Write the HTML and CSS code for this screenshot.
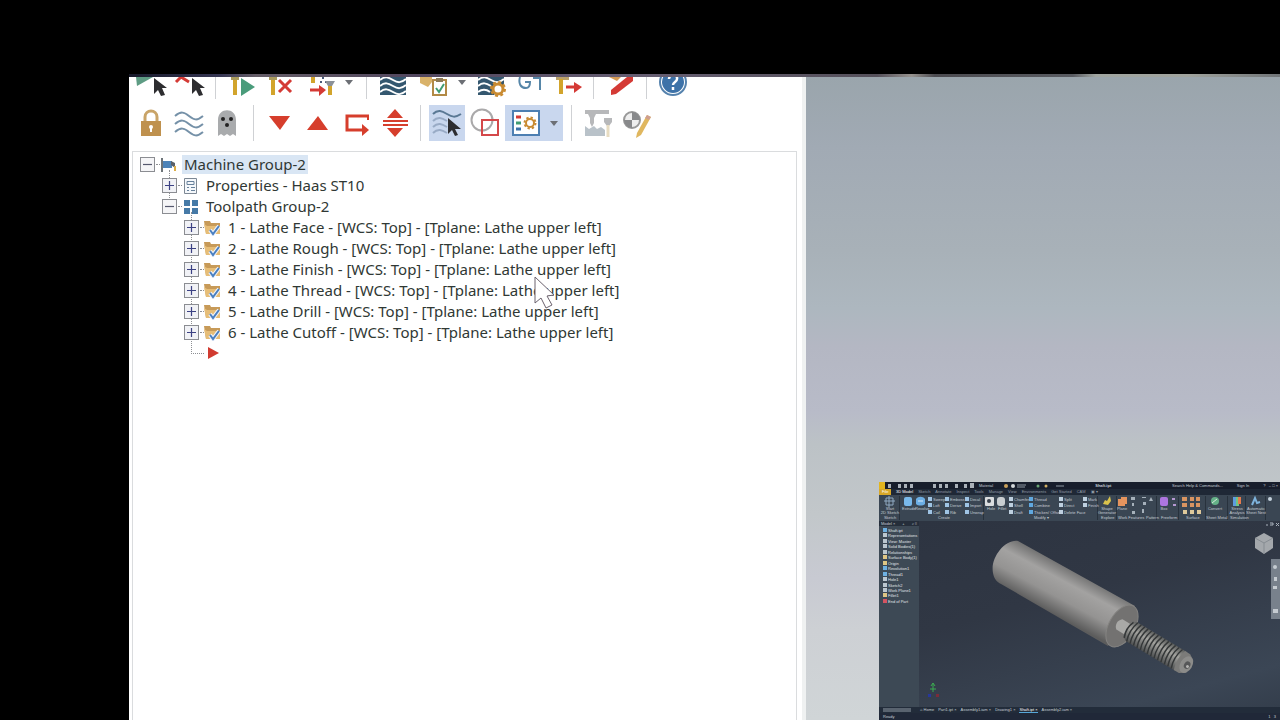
FILE: index.html
```
<!DOCTYPE html>
<html lang="en">
<head>
  <meta charset="UTF-8">
  <meta name="viewport" content="width=device-width, initial-scale=1.0">
  <title>Toolpaths</title>
  <link rel="stylesheet" href="styles.css">
</head>
<body>
  <!-- shared icons -->
  <svg class="defs" width="0" height="0" aria-hidden="true">
    <symbol id="plus" viewBox="0 0 15 15"><rect x=".5" y=".5" width="14" height="14" fill="#f1f2f6" stroke="#8b8d92"/><path d="M3 7.500h9M7.500 3v9" stroke="#3c4284" stroke-width="1.200"/></symbol>
    <symbol id="minus" viewBox="0 0 15 15"><rect x=".5" y=".5" width="14" height="14" fill="#f5f5f7" stroke="#8b8d92"/><path d="M3 7.500h9" stroke="#55586e" stroke-width="1.200"/></symbol>
    <symbol id="folder" viewBox="0 0 17 16"><path d="M0 1h6l1 2h9v11H2z" fill="#c79a58"/><path d="M0 4l3 2h13v8H2z" fill="#e6bd77"/><path d="M6 10l3 4 6-8" fill="none" stroke="#eef3fb" stroke-width="4"/><path d="M6 10l3 4 6-8" fill="none" stroke="#4a7fc0" stroke-width="2"/></symbol>
    <symbol id="drop" viewBox="0 0 8 5"><path d="M0 0h8L4 5z" fill="#6c6f75"/></symbol>
  </svg>

  <main class="stage">
    <div class="strip"></div>
    <div class="workspace">
      <section class="panel">
        <div class="toolbar toolbar-top">
          <button class="tool" aria-label="Select all operations"><svg width="36" height="24"><path d="M3 0h17L4 9z" fill="#5e9c84"/><path d="M21 1v16l4-4 3 6 4-1-3-7h5z" fill="#2d2d30"/></svg></button>
          <button class="tool" aria-label="Clear selection"><svg width="36" height="24"><path d="M5 5l5-5 8 5" fill="none" stroke="#d43a35" stroke-width="3"/><path d="M21 1v16l4-4 3 6 4-1-3-7h5z" fill="#2d2d30"/></svg></button>
          <i class="sep"></i>
          <button class="tool" aria-label="Regenerate selected"><svg width="36" height="24"><path d="M7 0h8v3H7z" fill="#a99a5c"/><path d="M9 3h4v15H9z" fill="#d2a42c"/><path d="M17 1l14 9-14 9z" fill="#4a9c7b"/></svg></button>
          <button class="tool" aria-label="Regenerate dirty"><svg width="36" height="24"><path d="M7 0h8v3H7z" fill="#a99a5c"/><path d="M9 3h4v15H9z" fill="#d2a42c"/><path d="M17 3l12 12M29 3L17 15" stroke="#d43a35" stroke-width="3"/></svg></button>
          <button class="tool tool-wide" aria-label="Post options"><svg width="36" height="24"><path d="M11 0h4v6h-4z" fill="#d2a42c"/><path d="M23 0v2M20 5h2M25 5h2" stroke="#4a5a78" stroke-width="2"/><path d="M10 13h12" stroke="#d43a35" stroke-width="3"/><path d="M19 8l7 5-7 6z" fill="#d43a35"/><path d="M25 4h10l-3 5h-4z" fill="#8b9198"/><path d="M28 9h4v9h-4z" fill="#d2a42c"/></svg><svg class="caret" width="8" height="5"><use href="#drop"/></svg></button>
          <i class="sep"></i>
          <button class="tool" aria-label="Backplot"><svg width="36" height="24"><path d="M5 0h26v18H5z" fill="#34576f"/><path d="M5 3c5-4 8-3 13 0s8 3 13-1M5 9c5-4 8-3 13 0s8 3 13-1M5 15c5-4 8-3 13 0s8 3 13-1" fill="none" stroke="#fff" stroke-width="2"/></svg></button>
          <button class="tool tool-wide" aria-label="Verify"><svg width="36" height="24"><path d="M7 0h12v5l-4 5-8-4z" fill="#d9b26a"/><path d="M20 3h13v15H20z" fill="#fff" stroke="#b28a46" stroke-width="2"/><path d="M23 1h7v4h-7z" fill="#8c7a58"/><path d="M23 11l3 4 5-8" fill="none" stroke="#419c72" stroke-width="2"/></svg><svg class="caret" width="8" height="5"><use href="#drop"/></svg></button>
          <button class="tool" aria-label="Simulator options"><svg width="36" height="24"><path d="M5 0h26v8l-10 10H5z" fill="#34576f"/><path d="M5 3c5-4 8-3 13 0s8 3 13-1M5 9c5-4 8-3 13 0M5 15c4-3 8-3 12 0" fill="none" stroke="#fff" stroke-width="2"/><circle cx="25" cy="12" r="5" fill="#fff" stroke="#c98b32" stroke-width="3"/><circle cx="25" cy="12" r="7" fill="none" stroke="#c98b32" stroke-width="2" stroke-dasharray="3 2.500"/></svg></button>
          <button class="tool" aria-label="Post selected"><svg width="36" height="24"><path d="M9 0c-2 7 1 11 6 11 3 0 4-2 4-6h-5M22 1h8M29 0v13" fill="none" stroke="#5686a8" stroke-width="2"/></svg></button>
          <button class="tool" aria-label="High feed"><svg width="36" height="24"><path d="M7 0h13v3H7z" fill="#b9a06a"/><path d="M10 2h4v15h-4z" fill="#d2a42c"/><path d="M17 10h11" stroke="#d43a35" stroke-width="3"/><path d="M25 5l8 5-8 6z" fill="#d43a35"/></svg></button>
          <i class="sep"></i>
          <button class="tool" aria-label="Delete"><svg width="36" height="24"><path d="M7 0h12l-4 4z" fill="#d59a55"/><path d="M25 0h6v4L14 17l-5 1v-5z" fill="#d43a35"/></svg></button>
          <i class="sep"></i>
          <button class="tool" aria-label="Help"><svg width="36" height="24"><circle cx="18" cy="5" r="13" fill="#fff" stroke="#5582ad" stroke-width="2"/><circle cx="18" cy="5" r="11" fill="#3d72a8"/><path d="M14 2c0-5 9-5 8 0 0 3-4 3-4 6M18 10v3" fill="none" stroke="#fff" stroke-width="2.500"/></svg></button>
        </div>

        <div class="toolbar">
          <button class="tool" aria-label="Lock"><svg width="36" height="36"><path d="M12 18v-6c0-8 12-8 12 0v6" fill="none" stroke="#c9a468" stroke-width="3"/><path d="M8 16h20v15H8z" fill="#bf914e"/><path d="M18 27v-5" stroke="#fff" stroke-width="2"/><circle cx="18" cy="22" r="2" fill="#fff"/></svg></button>
          <button class="tool" aria-label="Toggle display"><svg width="36" height="36"><path d="M4 11c6-5 9-4 14 0s8 5 14 0M4 19c6-5 9-4 14 0s8 5 14 0M4 27c6-5 9-4 14 0s8 5 14 0" fill="none" stroke="#7591a8" stroke-width="2"/></svg></button>
          <button class="tool" aria-label="Toggle posting"><svg width="36" height="36"><path d="M9 31V15c0-13 18-13 18 0v16l-3-2-3 2-3-2-3 2-3-2z" fill="#a9abad"/><circle cx="14" cy="14" r="2" fill="#222"/><circle cx="22" cy="14" r="2" fill="#222"/><circle cx="18" cy="20" r="2" fill="#222"/></svg></button>
          <i class="sep"></i>
          <button class="tool" aria-label="Move down"><svg width="36" height="36"><path d="M7 11h21L18 25z" fill="#d63e2c"/></svg></button>
          <button class="tool" aria-label="Move up"><svg width="36" height="36"><path d="M7 25h21L18 11z" fill="#d63e2c"/></svg></button>
          <button class="tool" aria-label="Position insert arrow"><svg width="36" height="36"><path d="M31 11H9v14h15" fill="none" stroke="#d63e2c" stroke-width="3"/><path d="M24 19l7 6-7 6z" fill="#d63e2c"/><path d="M30 10v5" stroke="#d63e2c" stroke-width="2"/></svg></button>
          <button class="tool" aria-label="Scroll to insert arrow"><svg width="36" height="36"><path d="M11 13l8-9 8 9zM11 23l8 9 8-9z" fill="#d63e2c"/><path d="M7 16h25M7 20h25" stroke="#d63e2c" stroke-width="2"/></svg></button>
          <i class="sep"></i>
          <button class="tool active" aria-label="Show selected only"><svg width="36" height="36"><path d="M4 9c5-5 9-3 14 0s8 4 14 0" fill="none" stroke="#5a7894" stroke-width="2"/><path d="M4 16c5-5 9-3 14 0M4 22c5-5 9-3 14 0M4 28c5-5 9-3 14 0" fill="none" stroke="#99abc6" stroke-width="2"/><path d="M19 13v16l4-4 3 6 3-1-3-6h6z" fill="#2d2d30"/></svg></button>
          <button class="tool" aria-label="Show associated geometry"><svg width="36" height="36"><circle cx="15" cy="15" r="10.500" fill="none" stroke="#aaa9aa" stroke-width="2"/><path d="M15 15h16v15H15z" fill="none" stroke="#d4484a" stroke-width="2"/></svg></button>
          <button class="tool tool-wide active" aria-label="Display options"><svg width="36" height="36"><path d="M8 6h26v24H8z" fill="#fff" stroke="#4d7fb2" stroke-width="2"/><path d="M11 12h5" stroke="#d43a35" stroke-width="3"/><path d="M11 18h5" stroke="#419c72" stroke-width="3"/><path d="M11 24h5" stroke="#3d72a8" stroke-width="3"/><circle cx="25" cy="18" r="4" fill="none" stroke="#c98b32" stroke-width="2"/><circle cx="25" cy="18" r="5.500" fill="none" stroke="#c98b32" stroke-width="2" stroke-dasharray="2.300 2"/></svg><svg class="caret" width="8" height="5"><use href="#drop"/></svg></button>
          <i class="sep"></i>
          <button class="tool" aria-label="Stock display"><svg width="36" height="36"><path d="M5 5h24v4H5zM8 9h8l-2 4v5l-2 4-2-4v-5zM24 13h8v4l-3 4h-2l-3-4z" fill="#b7b8ba"/><path d="M5 31V21l4 3 5-3 3 3 4-2 4 3v6z" fill="#b9c2c9"/><path d="M28 20v12" stroke="#e7dcc2" stroke-width="3"/></svg></button>
          <button class="tool" aria-label="Edit origin"><svg width="36" height="36"><circle cx="14" cy="15" r="8" fill="#eee" stroke="#999" stroke-width="2"/><path d="M14 7a8 8 0 0 1 8 8H6a8 8 0 0 0 8 8z" fill="#88898b"/><path d="M29 10l4 2-10 18-5 3 1-5z" fill="#e0b75f"/><path d="M29 10l4 2-2 3-4-2z" fill="#cf9f90"/></svg></button>
        </div>

        <div class="tree">
          <div class="row">
            <button class="expander" aria-label="Collapse"><svg width="15" height="15"><use href="#minus"/></svg></button>
            <svg class="icon" width="17" height="16"><path d="M2 1v14" stroke="#6d7479" stroke-width="2"/><path d="M3 4h9v7H3z" fill="#4d83b8"/><path d="M11 4l4 2v5l-4-3z" fill="#596068"/><path d="M15 9v5" stroke="#dcae49" stroke-width="2"/></svg>
            <span class="label selected">Machine Group-2</span>
          </div>
          <div class="branch">
            <div class="row">
              <button class="expander" aria-label="Expand"><svg width="15" height="15"><use href="#plus"/></svg></button>
              <svg class="icon" width="17" height="16"><path d="M2.500.5h12v15h-12z" fill="#f5f8fb" stroke="#7d8894"/><path d="M5 3.500h7v3H5z" fill="none" stroke="#67819b"/><path d="M5 9.500h2M5 12.500h2M9 9.500h4M9 12.500h4" stroke="#67819b"/></svg>
              <span class="label">Properties - Haas ST10</span>
            </div>
            <div class="row">
              <button class="expander" aria-label="Collapse"><svg width="15" height="15"><use href="#minus"/></svg></button>
              <svg class="icon" width="17" height="16"><path d="M2 1h6v6H2zM10 1h6v6h-6zM2 9h6v6H2zM10 9h6v6h-6z" fill="#467aa7"/></svg>
              <span class="label">Toolpath Group-2</span>
            </div>
            <div class="branch operations">
              <div class="row">
                <button class="expander" aria-label="Expand"><svg width="15" height="15"><use href="#plus"/></svg></button>
                <svg class="icon" width="17" height="16"><use href="#folder"/></svg>
                <span class="label">1 - Lathe Face - [WCS: Top] - [Tplane: Lathe upper left]</span>
              </div>
              <div class="row">
                <button class="expander" aria-label="Expand"><svg width="15" height="15"><use href="#plus"/></svg></button>
                <svg class="icon" width="17" height="16"><use href="#folder"/></svg>
                <span class="label">2 - Lathe Rough - [WCS: Top] - [Tplane: Lathe upper left]</span>
              </div>
              <div class="row">
                <button class="expander" aria-label="Expand"><svg width="15" height="15"><use href="#plus"/></svg></button>
                <svg class="icon" width="17" height="16"><use href="#folder"/></svg>
                <span class="label">3 - Lathe Finish - [WCS: Top] - [Tplane: Lathe upper left]</span>
              </div>
              <div class="row">
                <button class="expander" aria-label="Expand"><svg width="15" height="15"><use href="#plus"/></svg></button>
                <svg class="icon" width="17" height="16"><use href="#folder"/></svg>
                <span class="label">4 - Lathe Thread - [WCS: Top] - [Tplane: Lathe upper left]</span>
              </div>
              <div class="row">
                <button class="expander" aria-label="Expand"><svg width="15" height="15"><use href="#plus"/></svg></button>
                <svg class="icon" width="17" height="16"><use href="#folder"/></svg>
                <span class="label">5 - Lathe Drill - [WCS: Top] - [Tplane: Lathe upper left]</span>
              </div>
              <div class="row">
                <button class="expander" aria-label="Expand"><svg width="15" height="15"><use href="#plus"/></svg></button>
                <svg class="icon" width="17" height="16"><use href="#folder"/></svg>
                <span class="label">6 - Lathe Cutoff - [WCS: Top] - [Tplane: Lathe upper left]</span>
              </div>
              <div class="row insert">
                <span class="expander"></span>
                <svg class="icon" width="17" height="16"><path d="M4 1l11 6-11 6z" fill="#d13b30"/></svg>
              </div>
            </div>
          </div>
        </div>
      </section>

      <section class="viewport"></section>
    </div>

    <!-- part preview -->
    <section class="preview">
      <header class="app-title">
        <svg width="100" height="7"><path d="M0 0h6v7H0z" fill="#e2b51f"/><path d="M9 2h3v4H9zM19 2h3v4h-3zM25 2h3v4h-3zM31 2h3v4h-3zM54 2h3v4h-3zM60 2h3v4h-3zM66 2h3v4h-3zM76 2h3v4h-3zM85 2h3v4h-3zM91 1h4v5h-4z" fill="#a9b0b8"/></svg>
        <span>Material</span>
        <svg width="90" height="7"><circle cx="13" cy="4" r="2" fill="#c9a05a"/><circle cx="20" cy="4" r="2" fill="#d3d7da"/><path d="M24 3h9M24 5h8M63 4h8" stroke="#8e98a2"/><circle cx="45" cy="4" r="1.500" fill="#69a473"/><circle cx="53" cy="4" r="1.500" fill="#d0af62"/></svg>
        <b>Shaft.ipt</b>
        <span class="search">Search Help &amp; Commands...</span>
        <span>Sign In</span>
        <span>? &nbsp; – □ ×</span>
      </header>
      <nav class="app-tabs">
        <a class="file" href="#">File</a><a class="current" href="#">3D Model</a><a href="#">Sketch</a><a href="#">Annotate</a><a href="#">Inspect</a><a href="#">Tools</a><a href="#">Manage</a><a href="#">View</a><a href="#">Environments</a><a href="#">Get Started</a><a href="#">CAM</a><a href="#">▣ ▾</a>
      </nav>
      <svg class="ribbon" viewBox="879 495 401 26" role="img" aria-label="Ribbon">
        <g stroke="#28323d"><path d="M899.500 496v24M983.500 496v24M1097.500 496v24M1116.500 496v24M1156.500 496v24M1178.500 496v24M1205.500 496v24M1227.500 496v24M1245.500 496v24M1265.500 496v24"/></g>
        <path d="M886 498h7v7h-7zM884 501h11M889 496v12" fill="none" stroke="#8fa9c2"/>
        <rect x="904" y="497" width="8" height="9" rx="2" fill="#79b9eb"/>
        <path d="M916 499c2-3 7-3 9 0v5c-2 2-7 2-9 0z" fill="#6caee4"/><path d="M918 501h5" stroke="#d8e9f6"/>
        <g fill="#9fc4e4"><path d="M928 497h4v4h-4zM928 503h4v4h-4zM928 510h4v4h-4zM945 497h4v4h-4zM945 503h4v4h-4zM945 510h4v4h-4zM965 497h4v4h-4zM965 503h4v4h-4zM965 510h4v4h-4z"/></g>
        <rect x="985" y="497" width="9" height="9" rx="1" fill="#dadddf"/><circle cx="989" cy="501" r="2" fill="#38424d"/>
        <rect x="997" y="497" width="8" height="9" rx="3" fill="#c9ced1"/>
        <g fill="#bed0df"><path d="M1009 497h4v4h-4zM1009 503h4v4h-4zM1009 510h4v4h-4zM1083 497h4v4h-4zM1083 503h4v4h-4zM1059 497h4v4h-4zM1059 503h4v4h-4zM1059 510h4v4h-4z"/></g>
        <g fill="#60a8df"><path d="M1029 497h4v4h-4zM1029 503h4v4h-4zM1029 510h4v4h-4z"/></g>
        <path d="M1103 504l2-4 2 1 3-5 1 5-3 4z" fill="#d9c24c"/>
        <path d="M1118 499h7v7h-7zM1121 497h6v7h-6z" fill="#e5945e"/>
        <g fill="#a6b1bb"><path d="M1131 497h4v3h-4zM1132 503h2v3h-2zM1132 511h3v3h-3zM1142 497h4v1h-4zM1143 502h3v3h-3zM1142 509h2v4h-2zM1149 501l2-4 2 4z"/></g>
        <rect x="1160" y="497" width="8" height="9" rx="2" fill="#ad75df"/><path d="M1172 499h3M1173 505h3" stroke="#b698d2" stroke-width="2"/>
        <g fill="#d99461"><path d="M1182 497h5v4h-5zM1190 497h4v4h-4zM1196 497h4v4h-4zM1182 503h5v4h-5zM1190 503h4v4h-4zM1196 503h4v4h-4z"/></g><path d="M1183 510h4v4h-4zM1190 510h4v4h-4zM1197 510h4v4h-4z" fill="#dfc99b"/>
        <circle cx="1215" cy="501" r="4" fill="#65b188"/><path d="M1212 503l5-4" stroke="#d8e9dc"/>
        <path d="M1233 497h3v9h-3z" fill="#5d9ce0"/><path d="M1236 497h3v9h-3z" fill="#72c582"/><path d="M1238 497h3v7h-3z" fill="#e67b4c"/>
        <path d="M1252 505l3-7 2 5 3-1" fill="none" stroke="#7eb4dd" stroke-width="2"/><circle cx="1270" cy="499" r="2" fill="#c4d2dd"/>
        <g class="tiny">
          <text x="890" y="510" text-anchor="middle">Start</text><text x="890" y="514" text-anchor="middle">2D Sketch</text><text x="890" y="519" text-anchor="middle">Sketch</text>
          <text x="902" y="510">Extrude</text><text x="915" y="510">Revolve</text>
          <text x="933" y="501">Sweep</text><text x="933" y="507">Loft</text><text x="933" y="514">Coil</text>
          <text x="950" y="501">Emboss</text><text x="950" y="507">Derive</text><text x="950" y="514">Rib</text>
          <text x="970" y="501">Decal</text><text x="970" y="507">Import</text><text x="970" y="514">Unwrap</text><text x="938" y="519">Create</text>
          <text x="987" y="510">Hole</text><text x="998" y="510">Fillet</text>
          <text x="1014" y="501">Chamfer</text><text x="1014" y="507">Shell</text><text x="1014" y="514">Draft</text>
          <text x="1034" y="501">Thread</text><text x="1034" y="507">Combine</text><text x="1034" y="514">Thicken/ Offset</text>
          <text x="1064" y="501">Split</text><text x="1064" y="507">Direct</text><text x="1064" y="514">Delete Face</text><text x="1034" y="519">Modify ▾</text>
          <text x="1088" y="501">Mark</text><text x="1088" y="507">Finish</text>
          <text x="1107" y="510" text-anchor="middle">Shape</text><text x="1107" y="514" text-anchor="middle">Generator</text><text x="1101" y="519">Explore</text>
          <text x="1122" y="510" text-anchor="middle">Plane</text><text x="1118" y="519">Work Features</text><text x="1146" y="519">Pattern</text>
          <text x="1164" y="510" text-anchor="middle">Box</text><text x="1161" y="519">Freeform</text><text x="1186" y="519">Surface</text>
          <text x="1215" y="510" text-anchor="middle">Convert</text><text x="1206" y="519">Sheet Metal</text>
          <text x="1237" y="510" text-anchor="middle">Stress</text><text x="1237" y="514" text-anchor="middle">Analysis</text><text x="1230" y="519">Simulation</text>
          <text x="1256" y="510" text-anchor="middle">Automatic</text><text x="1256" y="514" text-anchor="middle">Sheet Nest</text>
        </g>
      </svg>
      <div class="app-body">
        <aside class="browser">
          <div class="browser-head"><span>Model ×</span><span>+</span><span>⌕ ≡</span></div>
          <ul>
            <li class="blue">Shaft.ipt</li>
            <li>Representations</li>
            <li>View: Master</li>
            <li>Solid Bodies(1)</li>
            <li>Relationships</li>
            <li class="gold">Surface Body(1)</li>
            <li class="gold">Origin</li>
            <li class="blue">Revolution1</li>
            <li class="blue">Thread1</li>
            <li>Hole1</li>
            <li>Sketch2</li>
            <li>Work Plane1</li>
            <li class="gold">Fillet1</li>
            <li class="red">End of Part</li>
          </ul>
        </aside>
        <div class="model">
          <svg class="part" viewBox="919 521 361 186" role="img" aria-label="Threaded shaft">
            <defs>
              <linearGradient id="shaft" gradientUnits="userSpaceOnUse" x1="1074" y1="570" x2="1051" y2="613"><stop offset="0" stop-color="#6f6f6f"/><stop offset=".3" stop-color="#a3a2a1"/><stop offset=".65" stop-color="#949392"/><stop offset="1" stop-color="#5c5c5c"/></linearGradient>
              <linearGradient id="thread" gradientUnits="userSpaceOnUse" x1="0" y1="-11" x2="0" y2="11"><stop offset="0" stop-color="#5e605f"/><stop offset=".4" stop-color="#a3a39f"/><stop offset="1" stop-color="#4e5051"/></linearGradient>
            </defs>
            <path d="M1018 541c-13-2-28 17-25 32 1 6 4 9 8 11l107 62 27-40z" fill="url(#shaft)"/>
            <ellipse cx="1122" cy="626" rx="13" ry="23" transform="rotate(30 1122 626)" fill="#737271" stroke="#858482"/>
            <g transform="translate(1122 626) rotate(31)">
              <path d="M-3-6H9V6H-3c-4-3-4-9 0-12z" fill="#a9a9a7"/>
              <path d="M6-9l5-2h58l5 3V8l-5 3H11L6 8z" fill="url(#thread)"/>
              <path d="M8-9q-4 9 0 18M12-11q-4 11 0 22M16-11q-4 11 0 22M20-11q-4 11 0 22M24-11q-4 11 0 22M28-11q-4 11 0 22M32-11q-4 11 0 22M36-11q-4 11 0 22M40-11q-4 11 0 22M44-11q-4 11 0 22M48-11q-4 11 0 22M52-11q-4 11 0 22M56-11q-4 11 0 22M60-11q-4 11 0 22M64-11q-4 11 0 22" fill="none" stroke="#343738" stroke-width="1.500"/>
              <path d="M67-11h6l6 4V7l-6 4h-6q-4-11 0-22z" fill="#7b7b79"/>
              <ellipse cx="75" cy="0" rx="6" ry="9" fill="#8c8c8a"/><ellipse cx="76" cy="0" rx="3" ry="4" fill="#565758"/><circle cx="77" cy="1" r="1.500" fill="#b4b4b2"/>
            </g>
            <path d="M1264 533l9 5v10l-9 6-9-6v-10z" fill="#a4a8ac"/><path d="M1255 538l9 5 9-5M1264 543v11" fill="none" stroke="#868c92"/>
            <path d="M1271 559h9v60h-9z" fill="#78818c"/><g fill="#c5cbd1"><circle cx="1275" cy="567" r="2"/><path d="M1274 577h3v4h-3zM1273 586h4v3h-4zM1273 609h5v4h-5z"/></g>
            <path d="M933 692v-9M931 686l2-3 2 3M930 689h6" fill="none" stroke="#3bab50"/><path d="M928 694h3v3h-3z" fill="#27379c"/><path d="M936 694h3v3h-3z" fill="#7a2b39"/>
            <path d="M1266 525h2M1270 523h3v2h-3M1276 523l3 3M1279 523l-3 3" fill="none" stroke="#aab3bd"/>
          </svg>
        </div>
      </div>
      <div class="doc-tabs"><i class="scroll"></i><span>⌂ Home</span><span>Part1.ipt ×</span><span>Assembly1.iam ×</span><span>Drawing1 ×</span><span class="current">Shaft.ipt ×</span><span>Assembly2.iam ×</span></div>
      <footer class="status"><span>Ready</span><span>1 &nbsp; 3</span></footer>
    </section>

    <svg class="pointer" width="22" height="34" aria-hidden="true"><path d="M1 1v26l6-5 5 10 6-3-5-9 7-1z" fill="#fff" stroke="#6b626e"/></svg>
  </main>
</body>
</html>
```
FILE: styles.css
```
* {
  box-sizing: border-box;
}
body {
  margin: 0;
  background-color: #000;
  font-family: "Noto Sans", sans-serif;
}
button {
  font: inherit;
  border: none;
  background: none;
  padding: 0;
  cursor: pointer;
}
svg {
  display: block;
}
.defs {
  position: absolute;
}
.stage {
  position: relative;
  display: flex;
  flex-direction: column;
  min-height: 100vh;
  padding: 74px 0 0 129px;
  overflow: hidden;
}
.strip {
  height: 3px;
  background: linear-gradient(90deg, #17192a, #363653 8%, #655d67 11%, #51465e 25%, #665e72 45%, #55505a 65%, #96928e 68%, #4c4b50 70%, #595b61 82%, #a0a5a0 84%, #a0a39d 92%, #707477);
}
.workspace {
  flex: 1;
  display: grid;
  grid-template-columns: 677fr 474fr;
}
.panel {
  display: flex;
  flex-direction: column;
  background-color: #fff;
  border-right: 4px solid #eff1f1;
  padding: 0 5px 0 3px;
}
.toolbar {
  display: flex;
  gap: 2px;
  height: 36px;
  padding-left: 1px;
}
.toolbar-top {
  height: 22px;
  margin-bottom: 6px;
  overflow: hidden;
}
.tool {
  display: flex;
  align-items: center;
  width: 36px;
  flex: none;
}
.toolbar-top .tool {
  align-items: flex-start;
}
.tool-wide {
  width: 58px;
}
.caret {
  margin-left: 9px;
}
.toolbar-top .caret {
  margin-top: 3px;
}
.active {
  background-color: #c9d7ee;
}
.sep {
  width: 1px;
  margin: 0 6px;
  background-color: #cfd1d4;
}

.tree {
  flex: 1;
  margin-top: 10px;
  padding: 2px 0 0 7px;
  border: 1px solid #dadcde;
  border-bottom: none;
  color: #303834;
  font-size: 15px;
}
.row {
  display: flex;
  align-items: center;
  gap: 5px;
  height: 21px;
}
.row > * {
  position: relative;
}
.expander {
  flex: none;
  width: 15px;
  height: 15px;
}
.expander::after {
  content: "";
  position: absolute;
  left: 16px;
  top: 7px;
  width: 4px;
  border-top: 1px dotted #8d8f93;
}
.icon {
  flex: none;
}
.label {
  padding: 0 2px;
  line-height: 19px;
  white-space: nowrap;
}
.selected {
  background-color: #d9e6f4;
}
.branch {
  position: relative;
  margin-left: 22px;
}
.branch::before {
  content: "";
  position: absolute;
  top: -5px;
  left: 7px;
  height: 36px;
  border-left: 1px dotted #8d8f93;
}
.operations::before {
  height: 142px;
}
.insert .expander::after {
  left: 7px;
  width: 13px;
}

.viewport {
  background: linear-gradient(#9aa5ac, #a1aab4 11%, #a8b1b8 27%, #adb7bf 36%, #b4b7c3 42%, #b8bbc8 52%, #bcc2c6 57%, #c2c7ca 68%, #c8cad2 78%, #cdd0d4 86%, #d0d5d7);
}

.pointer {
  position: absolute;
  left: 534px;
  top: 276px;
}

.preview {
  position: absolute;
  right: 0;
  bottom: 0;
  display: flex;
  flex-direction: column;
  width: 401px;
  height: 238px;
  background-color: #303946;
  color: #c5ccd4;
  font-family: "Liberation Sans", sans-serif;
  font-size: 4px;
  line-height: 5px;
  white-space: nowrap;
}
.app-title {
  display: flex;
  align-items: center;
  height: 7px;
  padding-right: 2px;
  background-color: #171d2b;
}
.app-title b {
  margin-left: 12px;
}
.search {
  margin-left: auto;
}
.app-title span + span {
  margin-left: 14px;
}
.app-tabs {
  display: flex;
  gap: 5px;
  height: 6px;
  background-color: #1f2836;
}
.app-tabs a {
  color: #929ca8;
  text-decoration: none;
}
.app-tabs .file {
  width: 12px;
  padding-left: 3px;
  background-color: #d8a728;
  color: #fff;
}
.app-tabs .current {
  color: #fff;
}
.ribbon {
  width: 100%;
  height: 26px;
  background-color: #3a4653;
}
.tiny {
  fill: #c5ccd4;
  font-size: 4px;
}
.app-body {
  flex: 1;
  display: flex;
  min-height: 0;
}
.browser {
  width: 40px;
  background-color: #3d4955;
}
.browser-head {
  display: flex;
  justify-content: space-between;
  padding: 0 2px;
  background-color: #252e3a;
}
.browser ul {
  display: flex;
  flex-direction: column;
  justify-content: space-between;
  list-style: none;
  height: 76px;
  margin: 2px 0 0;
  padding: 0 0 0 4px;
}
.browser li {
  display: flex;
  gap: 1px;
  color: #e0e5e9;
}
.browser li::before {
  content: "";
  flex: none;
  width: 4px;
  height: 4px;
  background-color: #bcc7cf;
}
.browser .blue::before {
  background-color: #6eb0e1;
}
.browser .gold::before {
  background-color: #dfc684;
}
.browser .red::before {
  background-color: #d45461;
}
.model {
  flex: 1;
  background: linear-gradient(165deg, #2d3441, #303744 40%, #3b4655 85%, #343e4c);
}
.part {
  width: 100%;
  height: 100%;
}
.doc-tabs {
  display: flex;
  gap: 4px;
  height: 6px;
  background-color: #222c3a;
}
.doc-tabs .scroll {
  width: 28px;
  height: 4px;
  margin: 1px 5px 0 4px;
  background-color: #59636f;
}
.doc-tabs .current {
  color: #fff;
  border-bottom: 1px solid #57a7d8;
}
.status {
  display: flex;
  justify-content: space-between;
  height: 7px;
  padding: 1px 4px;
  background-color: #202838;
}
```
